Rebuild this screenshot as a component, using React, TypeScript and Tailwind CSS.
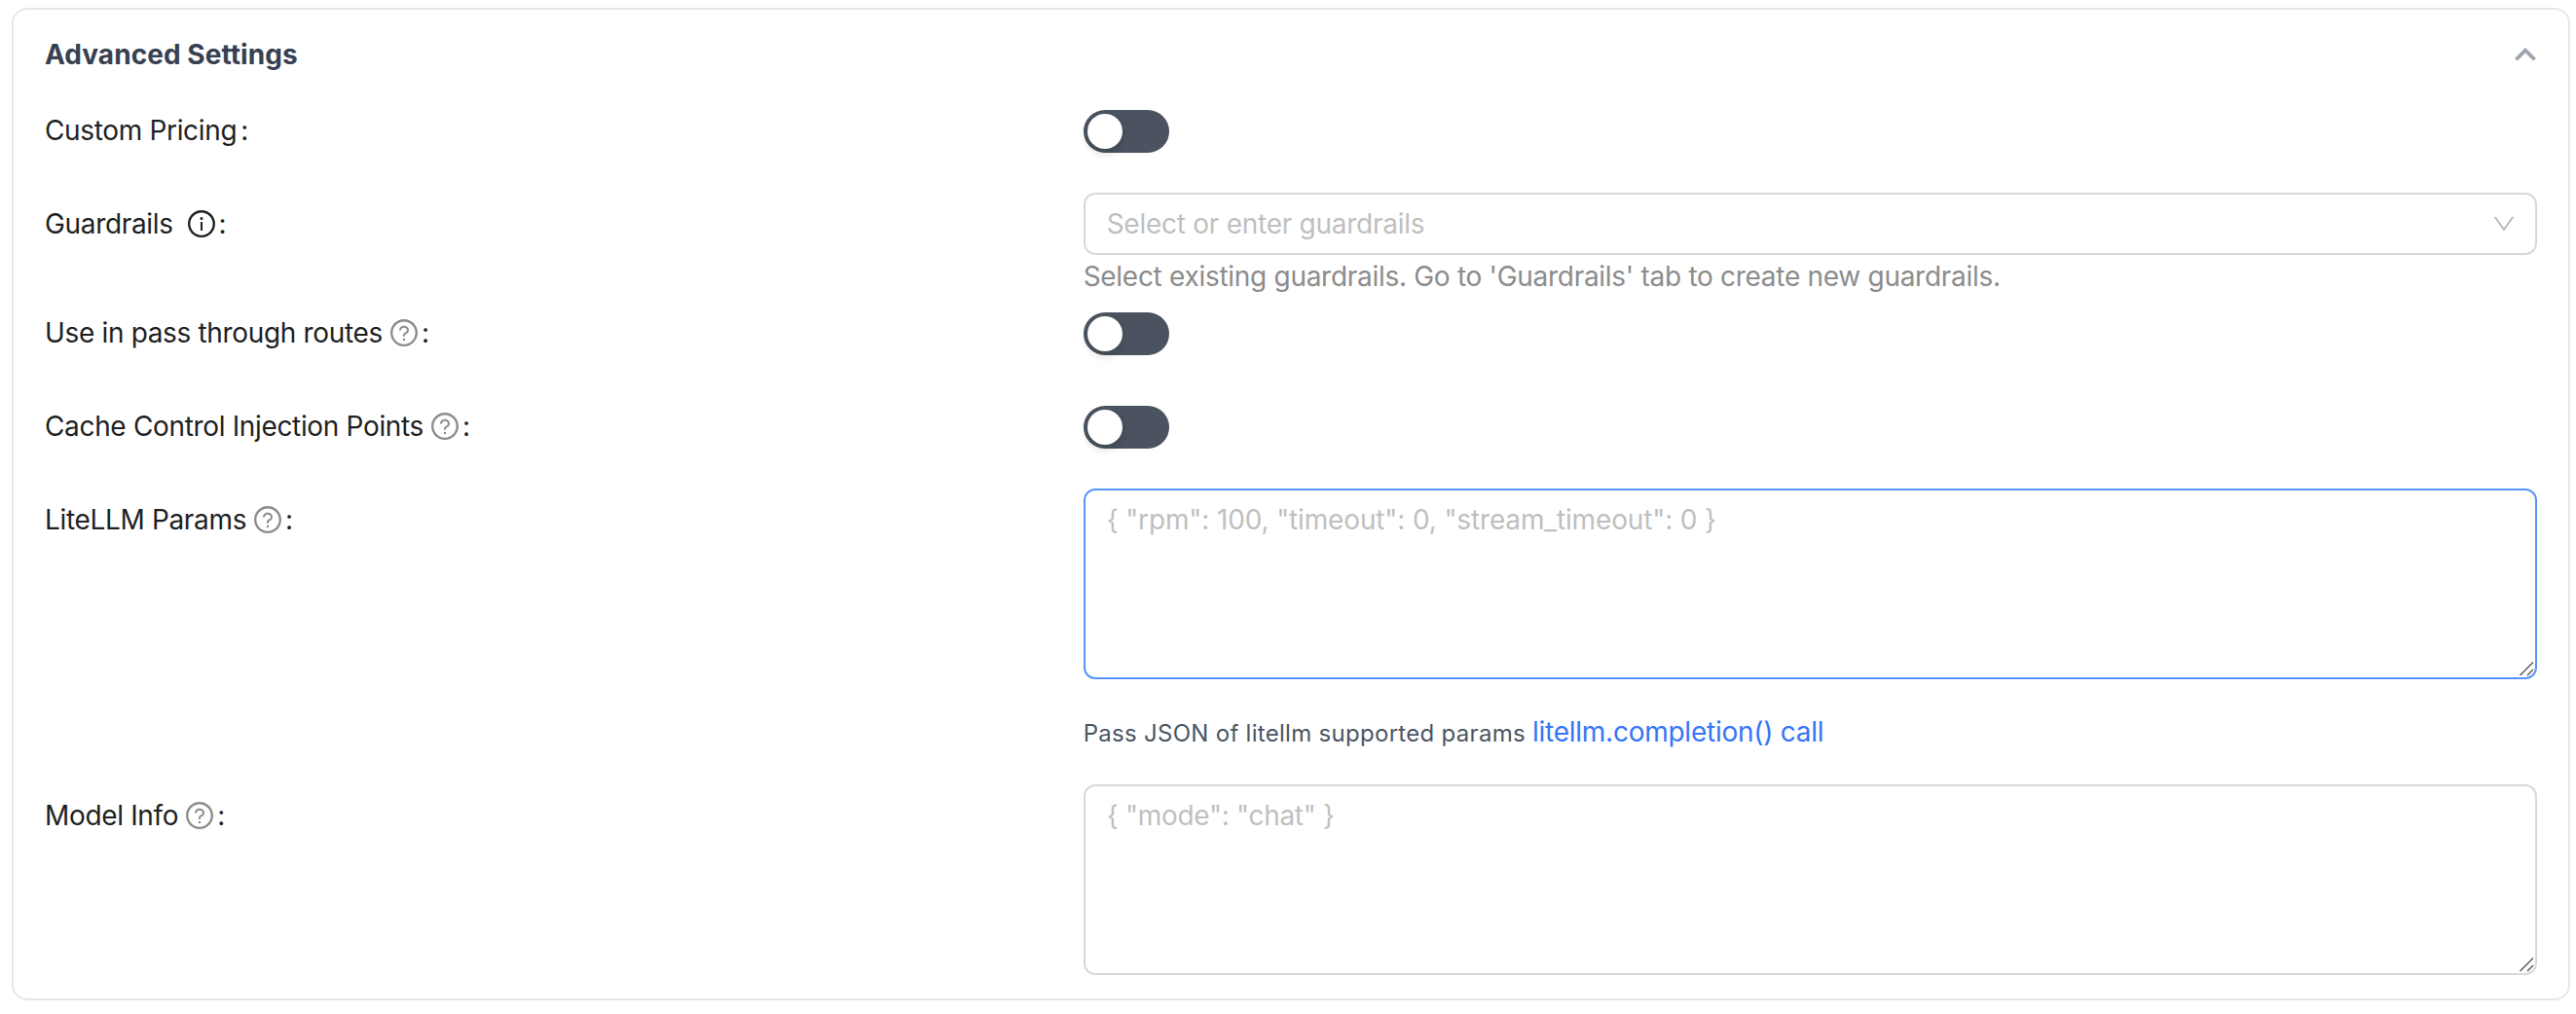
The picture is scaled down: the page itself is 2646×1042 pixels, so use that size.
import type { ReactNode } from 'react';
import { AiOutlineDown, AiOutlineInfoCircle, AiOutlineQuestionCircle } from 'react-icons/ai';

interface LabelProps {
  text: string;
  icon?: 'help' | 'info';
}

function Label({ text, icon }: LabelProps) {
  return (
    <label className="flex h-16 w-5/12 shrink-0 items-center text-[28px] text-[#1f1f1f]">
      <span className="tracking-[-0.34px]">{text}</span>
      {icon === 'help' && <AiOutlineQuestionCircle className="ml-1.5 size-8 text-[#8c8c8c]" />}
      {icon === 'info' && <AiOutlineInfoCircle className="ml-[13px] size-8" />}
      <span className={icon ? 'ml-0.5' : 'ml-1'}>:</span>
    </label>
  );
}

function Row({ label, className, children }: { label: ReactNode; className: string; children: ReactNode }) {
  return (
    <div className={`flex items-start ${className}`}>
      {label}
      <div className="min-w-0 flex-1">{children}</div>
    </div>
  );
}

function Toggle() {
  return (
    <button
      type="button"
      role="switch"
      aria-checked="false"
      className="mt-[11px] flex h-11 w-[88px] items-center rounded-full bg-[#4b5361] p-1"
    >
      <span className="size-9 rounded-full bg-white shadow-[0_4px_8px_rgba(0,35,11,0.2)]" />
    </button>
  );
}

function JsonArea({ placeholder, className }: { placeholder: string; className: string }) {
  return (
    <div className="relative">
      <textarea
        className={`block h-[196px] w-full resize-none rounded-xl border-2 bg-white px-[22px] py-2 text-[28px] leading-[44px] outline-none placeholder:text-[#bfbfbf] ${className}`}
        placeholder={placeholder}
      />
      <svg
        className="absolute right-1 bottom-[3px] size-4 overflow-visible"
        viewBox="0 0 16 16"
        fill="none"
        stroke="#5c5c5c"
        strokeWidth="1.5"
      >
        <path d="M2.5 15 16 1.5M10 15l6-6" />
      </svg>
    </div>
  );
}

function App() {
  return (
    <div className="h-[1042px] bg-white px-1.5 pt-2 pl-3 font-['Inter',sans-serif]">
      <div className="h-[1020px] w-[2628px] rounded-2xl border-2 border-[#e5e7eb] px-8">
        <div className="flex h-[92px] items-center justify-between">
          <h2 className="text-[28px] font-bold tracking-[0.05px] text-[#374151]">Advanced Settings</h2>
          <svg className="-mr-2 size-10 text-[#9ca3af]" viewBox="0 0 24 24" fill="currentColor">
            <path d="M12 10.83l-4.95 4.95-1.41-1.42L12 8l6.36 6.36-1.41 1.42z" stroke="currentColor" strokeWidth="0.3" />
          </svg>
        </div>

        <form>
          <Row className="h-24" label={<Label text="Custom Pricing" />}>
            <Toggle />
          </Row>

          <Row className="h-28" label={<Label text="Guardrails" icon="info" />}>
            <div className="flex h-16 items-center justify-between rounded-xl border-2 border-[#d9d9d9] px-[22px] text-[#bfbfbf]">
              <span className="text-[28px] tracking-[-0.26px]">Select or enter guardrails</span>
              <AiOutlineDown className="-mr-1 size-7" />
            </div>
            <p className="text-[28px] leading-[44px] tracking-[-0.29px] text-[#8c8c8c]">
              Select existing guardrails. Go to 'Guardrails' tab to create new guardrails.
            </p>
          </Row>

          <Row className="h-24" label={<Label text="Use in pass through routes" icon="help" />}>
            <Toggle />
          </Row>

          <Row className="h-24" label={<Label text="Cache Control Injection Points" icon="help" />}>
            <Toggle />
          </Row>

          <Row className="h-[220px]" label={<Label text="LiteLLM Params" icon="help" />}>
            <JsonArea
              placeholder='{ "rpm": 100, "timeout": 0, "stream_timeout": 0 }'
              className="border-[#5594f8] tracking-[-0.14px]"
            />
          </Row>

          <div className="flex h-[84px] pl-[41.6667%]">
            <p className="text-2xl leading-[60px] text-[#4b5563]">
              <span className="tracking-[0.29px]">Pass JSON of litellm supported params </span>
              <a href="#" className="text-[28px] tracking-[-0.25px] text-[#3575f6]">
                litellm.completion() call
              </a>
            </p>
          </div>

          <Row className="h-[196px]" label={<Label text="Model Info" icon="help" />}>
            <JsonArea placeholder='{ "mode": "chat" }' className="border-[#d9d9d9] tracking-[-0.28px]" />
          </Row>
        </form>
      </div>
    </div>
  );
}

export default App;
